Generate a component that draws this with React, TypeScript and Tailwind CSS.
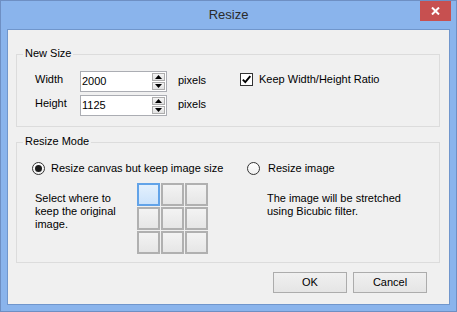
import React from "react";

function Spinner() {
  return (
    <div className="flex flex-col w-[14px] h-full py-[1px] pr-[1px] gap-[1px]">
      <div className="flex-1 border border-[#adadad] bg-gradient-to-b from-[#f4f4f4] to-[#e2e2e2] flex items-center justify-center">
        <svg width="7" height="4" viewBox="0 0 7 4">
          <path d="M3.5 0 L7 4 L0 4 Z" fill="#000" />
        </svg>
      </div>
      <div className="flex-1 border border-[#adadad] bg-gradient-to-b from-[#f4f4f4] to-[#e2e2e2] flex items-center justify-center">
        <svg width="7" height="4" viewBox="0 0 7 4">
          <path d="M0 0 L7 0 L3.5 4 Z" fill="#000" />
        </svg>
      </div>
    </div>
  );
}

function NumberInput({ value }: { value: string }) {
  return (
    <div className="flex w-[87px] h-[21px] border border-[#abadb3] bg-white">
      <div className="flex-1 pl-[1px] flex items-center text-[11px] text-black">{value}</div>
      <Spinner />
    </div>
  );
}

function Radio({ checked }: { checked?: boolean }) {
  return (
    <div className="w-[13px] h-[13px] rounded-full border border-[#333] bg-gradient-to-b from-[#ffffff] to-[#f0f0f0] flex items-center justify-center shrink-0">
      {checked && <div className="w-[7px] h-[7px] rounded-full bg-[#1c1c1c]" />}
    </div>
  );
}

function Group({ title, className, children }: { title: string; className?: string; children?: React.ReactNode }) {
  return (
    <div className={"relative border border-[#dcdcdc] " + (className ?? "")}>
      <span className="absolute left-[6px] top-[-8px] px-[2px] bg-[#f0f0f0] leading-[13px] text-[11px] text-black">
        {title}
      </span>
      {children}
    </div>
  );
}

function Cell({ selected }: { selected?: boolean }) {
  return selected ? (
    <div className="w-[23px] h-[23px] border-2 border-[#62a3e8] bg-gradient-to-b from-[#e3f0fd] to-[#cce3fb]" />
  ) : (
    <div className="w-[23px] h-[23px] border-2 border-[#b0b0b0] bg-gradient-to-b from-[#f3f3f3] to-[#e6e6e6]" />
  );
}

function Button({ label }: { label: string }) {
  return (
    <div className="w-[74px] h-[21px] border border-[#acacac] bg-gradient-to-b from-[#f0f0f0] to-[#e5e5e5] flex items-center justify-center text-[11px] text-black">
      {label}
    </div>
  );
}

export default function App() {
  return (
    <div className="w-[457px] h-[312px] border border-[#6e8fc3] bg-[#8ab4ec] flex flex-col font-['Liberation_Sans',Arial,sans-serif] select-none">
      <div className="relative h-[28px] shrink-0 flex items-center justify-center">
        <span className="text-[13px] text-[#2b2b2b] pb-[1px]">Resize</span>
        <div className="absolute right-[5px] top-0 w-[31px] h-[20px] bg-[#c75050] flex items-center justify-center">
          <svg width="9" height="8" viewBox="0 0 9 8">
            <path d="M1 0.5 L8 7.5 M8 0.5 L1 7.5" stroke="#fff" strokeWidth="2" />
          </svg>
        </div>
      </div>
      <div className="flex-1 px-[6px] pb-[6px] flex">
        <div className="flex-1 border border-[#7096cc] bg-[#f0f0f0] flex flex-col pt-[24px] pl-[8px]">
          <Group title="New Size" className="w-[424px] h-[73px] shrink-0">
            <div className="flex flex-col gap-[3px] pt-[16px] pl-[18px]">
              <div className="flex items-center h-[21px]">
                <span className="w-[45px] text-[11px] text-black mb-[4px]">Width</span>
                <NumberInput value="2000" />
                <span className="ml-[11px] w-[62px] text-[11px] text-black mb-[3px]">pixels</span>
                <div className="w-[13px] h-[13px] border border-[#333] bg-white flex items-center justify-center mb-[4px]">
                  <svg width="11" height="11" viewBox="0 0 11 11">
                    <path d="M1.8 5.6 L4.3 8.2 L9.3 2.2" stroke="#000" strokeWidth="1.9" fill="none" />
                  </svg>
                </div>
                <span className="ml-[6px] text-[11px] text-black mb-[4px]">Keep Width/Height Ratio</span>
              </div>
              <div className="flex items-center h-[21px]">
                <span className="w-[45px] text-[11px] text-black mb-[4px]">Height</span>
                <NumberInput value="1125" />
                <span className="ml-[11px] text-[11px] text-black mb-[2px]">pixels</span>
              </div>
            </div>
          </Group>
          <Group title="Resize Mode" className="w-[424px] h-[121px] shrink-0 mt-[15px]">
            <div className="flex pt-[19px] pl-[15px]">
              <div className="w-[215px] flex flex-col">
                <div className="flex items-center h-[13px] gap-[6px]">
                  <Radio checked />
                  <span className="text-[11px] text-black">Resize canvas but keep image size</span>
                </div>
                <div className="flex mt-[8px]">
                  <div className="ml-[3px] w-[102px] mt-[9px] text-[11px] leading-[13px] text-black">
                    Select where to<br />keep the original<br />image.
                  </div>
                  <div className="grid grid-cols-3 gap-[1px]">
                    <Cell selected />
                    <Cell />
                    <Cell />
                    <Cell />
                    <Cell />
                    <Cell />
                    <Cell />
                    <Cell />
                    <Cell />
                  </div>
                </div>
              </div>
              <div className="flex flex-col">
                <div className="flex items-center h-[13px] gap-[8px]">
                  <Radio />
                  <span className="text-[11px] text-black">Resize image</span>
                </div>
                <div className="ml-[20px] mt-[17px] text-[11px] leading-[13px] text-black">
                  The image will be stretched<br />using Bicubic filter.
                </div>
              </div>
            </div>
          </Group>
          <div className="flex justify-end gap-[6px] mt-[9px] mr-[22px]">
            <Button label="OK" />
            <Button label="Cancel" />
          </div>
        </div>
      </div>
    </div>
  );
}
